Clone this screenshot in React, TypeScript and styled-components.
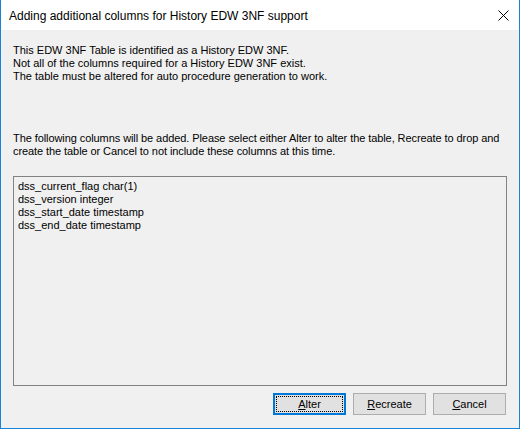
import styled, { createGlobalStyle } from "styled-components"

const GlobalStyle = createGlobalStyle`
  html, body {
    margin: 0;
    padding: 0;
    background: #ffffff;
  }
  * {
    box-sizing: border-box;
  }
`

const Window = styled.div`
  width: 520px;
  height: 429px;
  display: flex;
  flex-direction: column;
  border: 1px solid #1883d7;
  border-top: none;
  background: #f0f0f0;
  font-family: "Liberation Sans", Arial, sans-serif;
  color: #000;
`

const TitleBar = styled.div`
  height: 30px;
  flex: none;
  display: flex;
  align-items: center;
  justify-content: space-between;
  background: #ffffff;
  padding-left: 8px;
`

const Title = styled.span`
  font-size: 12px;
  padding-top: 1px;
`

const CloseButton = styled.div`
  width: 30px;
  height: 30px;
  display: flex;
  align-items: center;
  justify-content: center;
  margin-right: 1px;
`

const Body = styled.div`
  flex: 1;
  display: flex;
  flex-direction: column;
  padding: 14px 12px 13px 12px;
`

const Message = styled.p<{ $gap?: number; $tight?: boolean }>`
  margin: 0 0 ${(p) => p.$gap ?? 0}px 0;
  font-size: 11px;
  line-height: 13px;
  white-space: pre;
  letter-spacing: ${(p) => (p.$tight ? "-0.08px" : "0")};
`

const ListBox = styled.div`
  height: 210px;
  flex: none;
  border: 1px solid #828282;
  background: #f0f0f0;
  padding: 3px 4px;
  font-size: 11px;
  line-height: 13px;
  white-space: pre;
`

const ButtonRow = styled.div`
  display: flex;
  justify-content: flex-end;
  gap: 7px;
  margin-top: 7px;
  padding-right: 1px;
`

const Button = styled.button<{ $focused?: boolean }>`
  width: 73px;
  height: 22px;
  padding: 0;
  font-family: "Liberation Sans", Arial, sans-serif;
  font-size: 11px;
  color: #000;
  background: #e1e1e1;
  border: ${(p) => (p.$focused ? "2px solid #0078d7" : "1px solid #adadad")};
  position: relative;
  display: flex;
  align-items: center;
  justify-content: center;

  &::after {
    content: "";
    display: ${(p) => (p.$focused ? "block" : "none")};
    position: absolute;
    inset: 1px;
    border: 1px dotted #000;
  }
`

function CloseIcon() {
  return (
    <svg width="11" height="11" viewBox="0 0 11 11">
      <path d="M0.5 0.5 L10.5 10.5 M10.5 0.5 L0.5 10.5" stroke="#000" strokeWidth="1" fill="none" />
    </svg>
  )
}

function App() {
  return (
    <>
      <GlobalStyle />
      <Window>
        <TitleBar>
          <Title>Adding additional columns for History EDW 3NF support</Title>
          <CloseButton><CloseIcon /></CloseButton>
        </TitleBar>
        <Body>
          <Message $gap={49}>
            {"This EDW 3NF Table is identified as a History EDW 3NF.\nNot all of the columns required for a History EDW 3NF exist.\nThe table must be altered for auto procedure generation to work."}
          </Message>
          <Message $gap={18} $tight>
            {"The following columns will be added. Please select either Alter to alter the table, Recreate to drop and\ncreate the table or Cancel to not include these columns at this time."}
          </Message>
          <ListBox>
            {"dss_current_flag char(1)\ndss_version integer\ndss_start_date timestamp\ndss_end_date timestamp"}
          </ListBox>
          <ButtonRow>
            <Button $focused><span><u>A</u>lter</span></Button>
            <Button><span><u>R</u>ecreate</span></Button>
            <Button><span><u>C</u>ancel</span></Button>
          </ButtonRow>
        </Body>
      </Window>
    </>
  )
}

export default App
